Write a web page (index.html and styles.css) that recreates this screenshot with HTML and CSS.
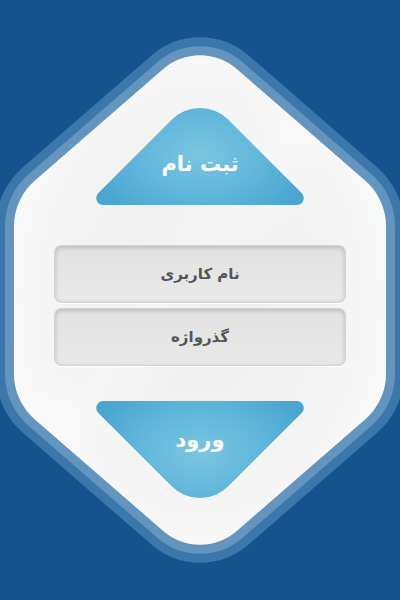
FILE: index.html
```html
<!DOCTYPE html>
<html lang="fa" dir="rtl">
<head>
<meta charset="utf-8">
<title>ورود</title>
<link rel="stylesheet" href="styles.css">
</head>
<body>
<div class="stage">
  <svg class="backdrop" width="400" height="600" viewBox="0 0 400 600" aria-hidden="true">
    <defs>
      <radialGradient id="paper" cx="50%" cy="50%" r="60%">
        <stop offset="0" stop-color="#eeeeee"/>
        <stop offset="0.6" stop-color="#f3f3f3"/>
        <stop offset="1" stop-color="#fcfcfc"/>
      </radialGradient>
      <linearGradient id="sheen" x1="0" y1="0" x2="1" y2="1">
        <stop offset="0.35" stop-color="#ffffff" stop-opacity="0"/>
        <stop offset="0.45" stop-color="#ffffff" stop-opacity="0.35"/>
        <stop offset="0.55" stop-color="#ffffff" stop-opacity="0"/>
      </linearGradient>
    </defs>
    <path d="M398,205 L404,205 L404,395 L398,395 Z" fill="#6395bf"/>
    <path class="ring-outer" d="M163.2,69 A56,56 0 0 1 236.8,69 L365.36,180.84 A60,60 0 0 1 386,226.2 L386,373.84 A60,60 0 0 1 365.36,419.16 L236.8,531 A56,56 0 0 1 163.2,531 L34.64,419.16 A60,60 0 0 1 14,373.84 L14,226.2 A60,60 0 0 1 34.64,180.84 Z"/>
    <path class="ring-inner" d="M163.2,69 A56,56 0 0 1 236.8,69 L365.36,180.84 A60,60 0 0 1 386,226.2 L386,373.84 A60,60 0 0 1 365.36,419.16 L236.8,531 A56,56 0 0 1 163.2,531 L34.64,419.16 A60,60 0 0 1 14,373.84 L14,226.2 A60,60 0 0 1 34.64,180.84 Z"/>
    <path d="M163.2,69 A56,56 0 0 1 236.8,69 L365.36,180.84 A60,60 0 0 1 386,226.2 L386,373.84 A60,60 0 0 1 365.36,419.16 L236.8,531 A56,56 0 0 1 163.2,531 L34.64,419.16 A60,60 0 0 1 14,373.84 L14,226.2 A60,60 0 0 1 34.64,180.84 Z" fill="url(#paper)"/>
    <path d="M163.2,69 A56,56 0 0 1 236.8,69 L365.36,180.84 A60,60 0 0 1 386,226.2 L386,373.84 A60,60 0 0 1 365.36,419.16 L236.8,531 A56,56 0 0 1 163.2,531 L34.64,419.16 A60,60 0 0 1 14,373.84 L14,226.2 A60,60 0 0 1 34.64,180.84 Z" fill="url(#sheen)"/>
  </svg>

  <div class="panel">
    <div class="tri tri-up"><span>ثبت نام</span></div>
    <div class="fields">
      <div class="field">نام کاربری</div>
      <div class="field">گذرواژه</div>
    </div>
    <div class="tri tri-down"><span>ورود</span></div>
  </div>
</div>
</body>
</html>
```
FILE: styles.css
```css
html, body {
  margin: 0;
  padding: 0;
  background: #15528e;
}

.stage {
  position: relative;
  width: 400px;
  height: 600px;
  overflow: hidden;
  background: #15528e;
  font-family: "DejaVu Sans", "Noto Sans", sans-serif;
}

.backdrop {
  position: absolute;
  left: 0;
  top: 0;
}

.ring-outer {
  fill: #3b77ab;
  stroke: #3b77ab;
  stroke-width: 36px;
  stroke-linejoin: round;
}

.ring-inner {
  fill: #6395bf;
  stroke: #6395bf;
  stroke-width: 18px;
  stroke-linejoin: round;
}

.panel {
  position: relative;
  display: flex;
  flex-direction: column;
  align-items: center;
  padding-top: 102px;
}

.tri {
  width: 228px;
  height: 103px;
  display: flex;
  justify-content: center;
  color: #ffffff;
  font-weight: bold;
  font-size: 21px;
}

.tri-up {
  align-items: flex-end;
  background: radial-gradient(ellipse 115px 75px at 50% 50%, #7ac6e1 0%, #60b6da 55%, #4aa6d0 100%);
  clip-path: path('M85.7,17.7 A40,40 0 0 1 142.3,17.7 L215.65,91.05 A7,7 0 0 1 210.7,103 L17.3,103 A7,7 0 0 1 12.35,91.05 Z');
}

.tri-up span {
  margin-bottom: 29px;
}

.tri-down {
  margin-top: 35px;
  align-items: flex-start;
  background: radial-gradient(ellipse 115px 75px at 50% 50%, #7ac6e1 0%, #60b6da 55%, #4aa6d0 100%);
  clip-path: path('M85.7,85.3 A40,40 0 0 0 142.3,85.3 L215.65,11.95 A7,7 0 0 0 210.7,0 L17.3,0 A7,7 0 0 0 12.35,11.95 Z');
}

.tri-down span {
  margin-top: 27px;
}

.fields {
  margin-top: 40px;
  display: flex;
  flex-direction: column;
  gap: 5px;
}

.field {
  width: 292px;
  height: 58px;
  box-sizing: border-box;
  border: 1px solid #d4d4d4;
  border-radius: 7px;
  background: linear-gradient(#e2e2e2, #e9e9e9);
  box-shadow: inset 0 2px 4px rgba(0, 0, 0, 0.14), inset 0 0 6px rgba(0, 0, 0, 0.05), 0 1px 0 #ffffff;
  display: flex;
  align-items: center;
  justify-content: center;
  color: #555555;
  font-weight: bold;
  font-size: 15px;
}
```
